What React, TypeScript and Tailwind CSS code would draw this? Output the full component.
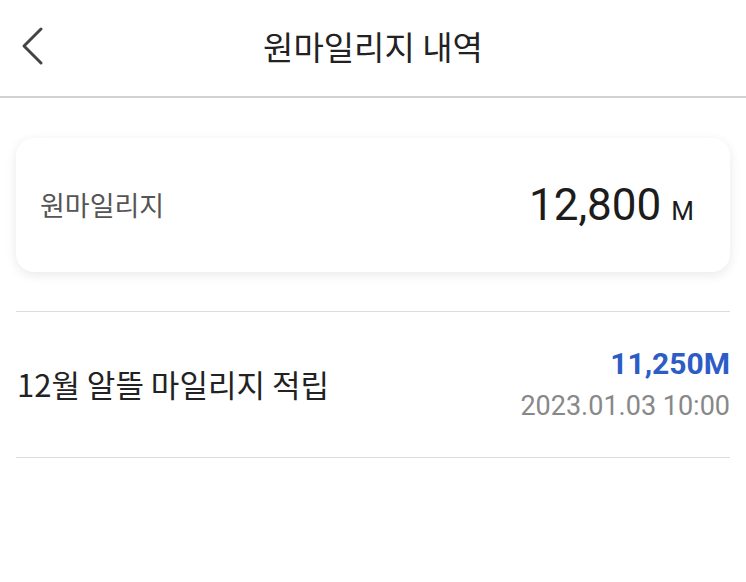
const font = { fontFamily: '"Noto Sans CJK KR", "Noto Sans", sans-serif' };

function BackIcon() {
  return (
    <svg width="28" height="40" viewBox="0 0 28 40" fill="none">
      <polyline
        points="22,3 5,20 22,37"
        stroke="#444"
        strokeWidth="3"
        strokeLinecap="round"
        strokeLinejoin="round"
      />
    </svg>
  );
}

export default function App() {
  return (
    <div className="min-h-screen bg-white" style={font}>
      {/* Header */}
      <header className="grid h-[98px] grid-cols-[64px_1fr_64px] items-center border-b-2 border-[#d2d2d2]">
        <button className="flex items-center pl-[19px] pb-1">
          <BackIcon />
        </button>
        <h1 className="pb-1 text-center text-[33px] font-normal leading-none text-[#222]">원마일리지 내역</h1>
        <div />
      </header>

      <main className="px-4">
        {/* Balance card */}
        <div className="mt-10 flex h-[134px] items-center justify-between rounded-[18px] bg-white pl-6 pr-9 shadow-[0_3px_12px_rgba(0,0,0,0.09)]">
          <span className="text-[27px] text-[#555]">원마일리지</span>
          <div className="flex items-baseline gap-[10px] font-['Roboto'] text-[#1c1c1c]">
            <span className="text-[44px] leading-none">12,800</span>
            <span className="text-[26px] leading-none">M</span>
          </div>
        </div>

        {/* History */}
        <ul className="mt-[39px] border-t border-[#dcdcdc]">
          <li className="flex h-[146px] items-center justify-between border-b border-[#dcdcdc] pl-[1px]">
            <span className="text-[31px] text-[#222]">12월 알뜰 마일리지 적립</span>
            <div className="flex flex-col items-end gap-[14px] font-['Roboto']">
              <span className="text-[30px] font-bold leading-none text-[#2d5cc6]">11,250M</span>
              <span className="text-[27px] leading-none text-[#888]">2023.01.03 10:00</span>
            </div>
          </li>
        </ul>
      </main>
    </div>
  );
}
